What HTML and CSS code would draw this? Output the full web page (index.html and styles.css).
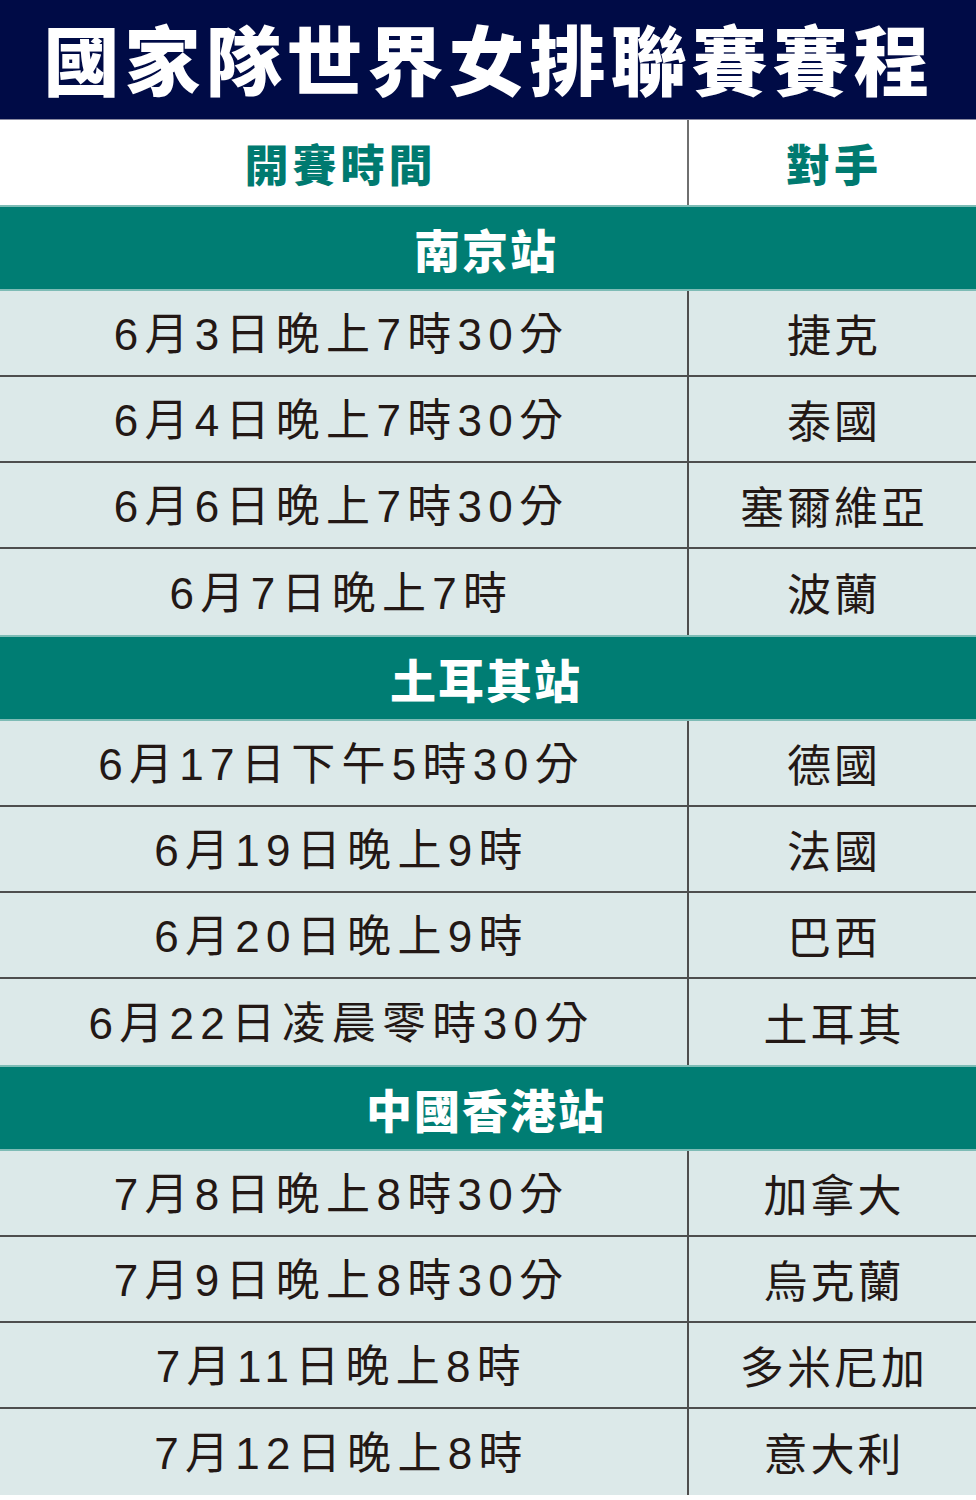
FILE: index.html
```html
<!DOCTYPE html>
<html lang="zh-Hant">
<head>
<meta charset="utf-8">
<title>國家隊世界女排聯賽賽程</title>
<link rel="stylesheet" href="styles.css">
</head>
<body>
<div class="page">
  <div class="title"><span class="title-text">國家隊世界女排聯賽賽程</span></div>
  <div class="table">
    <div class="row head"><div class="cell left">開賽時間</div><div class="cell right">對手</div></div>
    <div class="section">南京站</div>
    <div class="row"><div class="cell left">6月3日晚上7時30分</div><div class="cell right">捷克</div></div>
    <div class="row"><div class="cell left">6月4日晚上7時30分</div><div class="cell right">泰國</div></div>
    <div class="row"><div class="cell left">6月6日晚上7時30分</div><div class="cell right">塞爾維亞</div></div>
    <div class="row last"><div class="cell left">6月7日晚上7時</div><div class="cell right">波蘭</div></div>
    <div class="section">土耳其站</div>
    <div class="row"><div class="cell left">6月17日下午5時30分</div><div class="cell right">德國</div></div>
    <div class="row"><div class="cell left">6月19日晚上9時</div><div class="cell right">法國</div></div>
    <div class="row"><div class="cell left">6月20日晚上9時</div><div class="cell right">巴西</div></div>
    <div class="row last"><div class="cell left">6月22日凌晨零時30分</div><div class="cell right">土耳其</div></div>
    <div class="section">中國香港站</div>
    <div class="row"><div class="cell left">7月8日晚上8時30分</div><div class="cell right">加拿大</div></div>
    <div class="row"><div class="cell left">7月9日晚上8時30分</div><div class="cell right">烏克蘭</div></div>
    <div class="row"><div class="cell left">7月11日晚上8時</div><div class="cell right">多米尼加</div></div>
    <div class="row last"><div class="cell left">7月12日晚上8時</div><div class="cell right">意大利</div></div>
  </div>
</div>
</body>
</html>
```

FILE: styles.css
```css
* { box-sizing: border-box; }
html, body { margin: 0; padding: 0; background: #ffffff; }
body {
  width: 976px;
  font-family: "Liberation Sans", "Noto Sans CJK TC", sans-serif;
}
.page { width: 976px; }

.title {
  height: 120px;
  background: #000b46;
  border-bottom: 1px solid #8a8aa0;
  display: flex;
  align-items: center;
  justify-content: center;
}
.title-text {
  display: inline-block;
  color: #ffffff;
  font-family: "Noto Sans CJK TC", sans-serif;
  font-weight: 900;
  font-size: 76px;
  line-height: 1;
  letter-spacing: 5px;
  margin-left: 2px;
  margin-top: -6px;
}

.table { display: flex; flex-direction: column; }

.row {
  display: grid;
  grid-template-columns: 689px 1fr;
  height: 86px;
  background: #dce9e9;
  border-bottom: 2px solid #4e4e4e;
}
.row.last { border-bottom: none; }
.row.head {
  background: #ffffff;
  border-bottom: none;
  height: 85px;
}
.cell {
  display: flex;
  align-items: center;
  justify-content: center;
  color: #231815;
  font-size: 44px;
  line-height: 1;
  padding-top: 4px;
}
.cell.left {
  border-right: 2px solid #4e4e4e;
  letter-spacing: 6.3px;
  padding-right: 4px;
}
.cell.right {
  font-family: "Noto Sans CJK TC", sans-serif;
  letter-spacing: 3px;
  padding-left: 3px;
  padding-top: 0;
}

.row.head .cell {
  color: #007a70;
  font-family: "Noto Sans CJK TC", sans-serif;
  font-weight: 900;
  font-size: 44px;
  letter-spacing: 4px;
  padding-top: 0;
}
.row.head .cell.left { border-right: 2px solid #6f6f6f; padding-right: 6px; }

.section {
  height: 86px;
  background: #007d73;
  border-top: 2px solid #7ebcb6;
  border-bottom: 2px solid #7ebcb6;
  color: #ffffff;
  font-family: "Noto Sans CJK TC", sans-serif;
  font-weight: 900;
  font-size: 46px;
  letter-spacing: 2px;
  line-height: 1;
  display: flex;
  align-items: center;
  justify-content: center;
  padding-right: 4px;
}
```
